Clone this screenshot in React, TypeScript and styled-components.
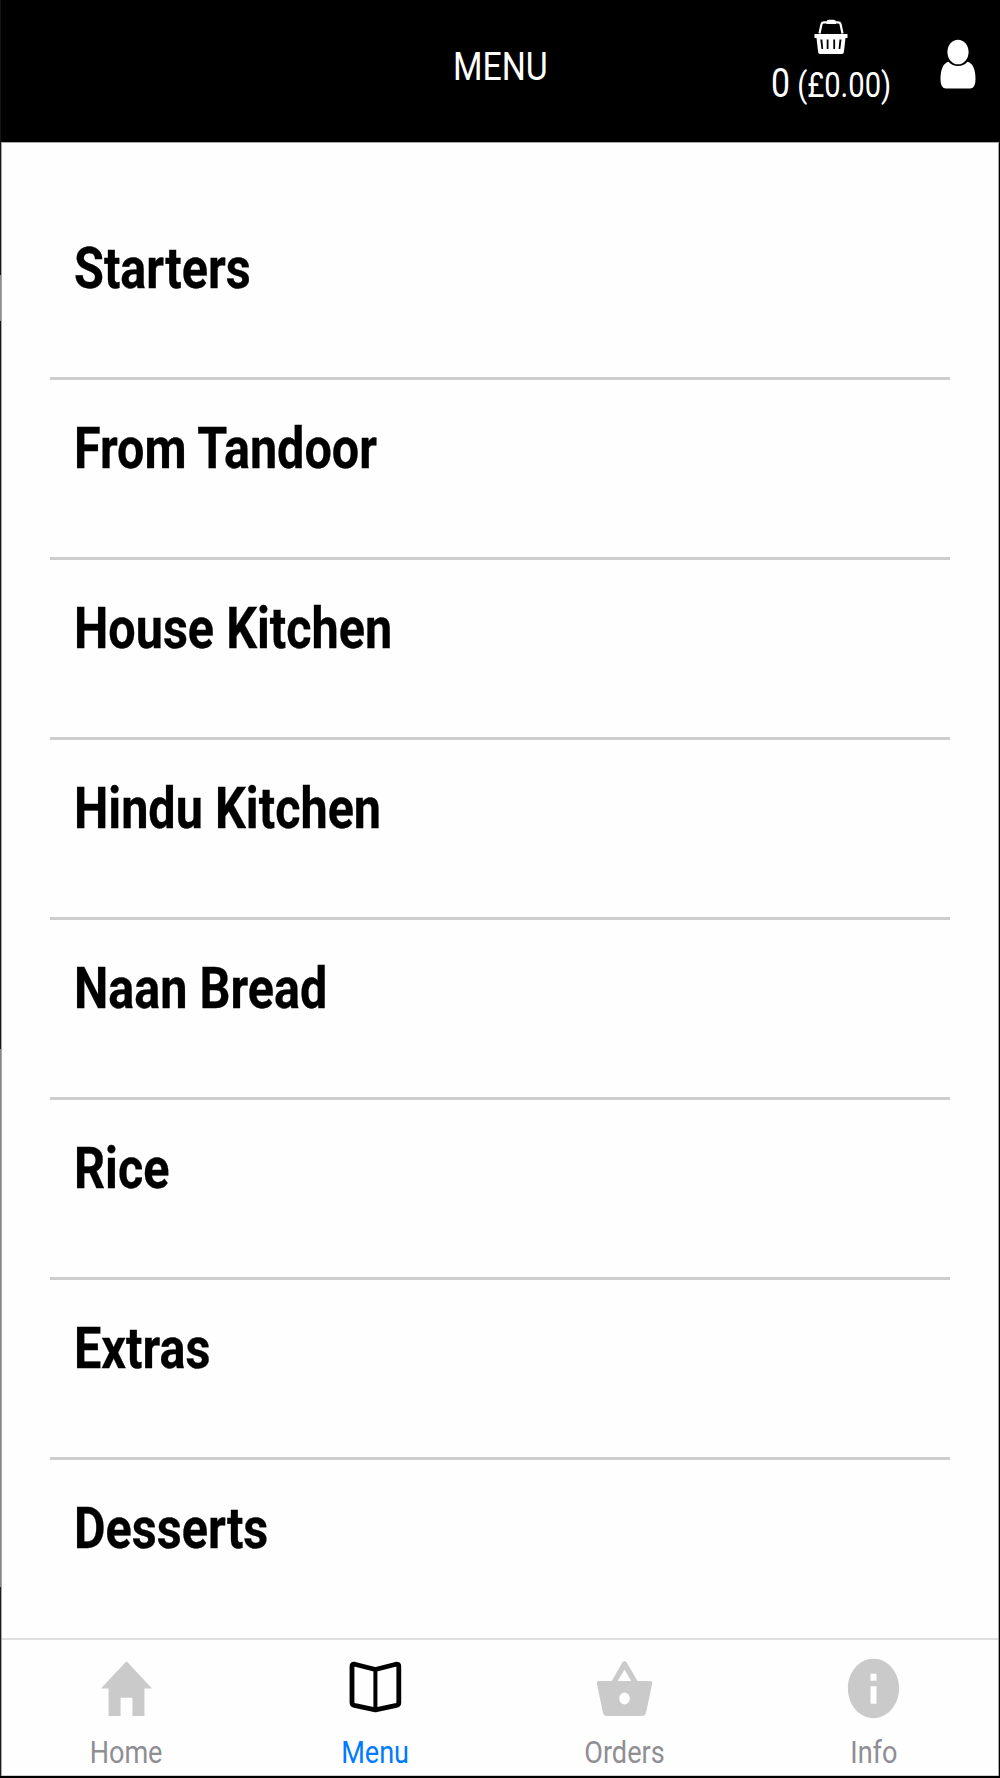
import React from "react";
import styled, { createGlobalStyle } from "styled-components";

const GlobalStyle = createGlobalStyle`
  * { box-sizing: border-box; }
  html, body { margin: 0; padding: 0; background: #fff; }
`;

const Frame = styled.div`
  width: 1000px;
  height: 1778px;
  display: flex;
  overflow: hidden;
  border-right: 1px solid #000;
  border-bottom: 2px solid #000;
`;

const FrameEdge = styled.div`
  flex: none;
  width: 1px;
  background: linear-gradient(
    #15161a 275px,
    #8c8c8c 275px 321px,
    #15161a 321px 1049px,
    #868686 1049px 1587px,
    #1c1c1c 1587px
  );
`;

const Screen = styled.div`
  flex: 1;
  display: flex;
  flex-direction: column;
  background: #fefefe;
  font-family: Roboto, "Liberation Sans", sans-serif;
`;

const Header = styled.header`
  flex: none;
  height: 142px;
  display: grid;
  grid-template-columns: 1fr 140px 1fr;
  background: #000;
  color: #fff;
`;

const Title = styled.h1`
  grid-column: 2;
  margin: 0;
  padding-top: 45px;
  justify-self: center;
  font-size: 39.5px;
  font-weight: 400;
  line-height: 44px;
  white-space: nowrap;
  transform: scaleX(0.856);
`;

const HeaderActions = styled.div`
  grid-column: 3;
  justify-self: end;
  padding-right: 23px;
  display: flex;
  align-items: flex-start;
`;

const BasketButton = styled.div`
  width: 130px;
  margin-right: 44px;
  padding-top: 19px;
  display: flex;
  flex-direction: column;
  align-items: center;
`;

const BasketTotal = styled.div`
  margin-top: 8px;
  font-size: 34.5px;
  line-height: 44px;
  white-space: nowrap;
  transform: scaleX(0.846);
`;

const BasketCount = styled.span`
  font-size: 40px;
`;

const AccountButton = styled.div`
  padding-top: 39px;
  display: flex;
`;

const Body = styled.div`
  flex: 1;
  min-height: 0;
  display: flex;
  flex-direction: column;
  border: solid #a8a8a8;
  border-width: 1px 1px 0;
`;

const MenuList = styled.ul`
  flex: 1;
  min-height: 0;
  margin: 0;
  padding: 57px 48px 0;
  list-style: none;
  overflow: hidden;
`;

const MenuItem = styled.li`
  height: 180px;
  padding: 32.500px 0 0 24px;
  border-bottom: 3px solid #cdcdcd;
  &:last-child { border-bottom: 0; }
`;

const MenuLabel = styled.span`
  display: inline-block;
  color: #000;
  font-size: 57px;
  font-weight: 700;
  line-height: 72px;
  white-space: nowrap;
  transform: scaleX(0.852);
  transform-origin: left center;
  -webkit-text-stroke: 0.3px #000;
`;

const TabBar = styled.nav`
  flex: none;
  height: 138px;
  display: grid;
  grid-template-columns: repeat(4, 1fr);
  border-top: 2px solid #dedede;
  border-bottom: 1px solid #d0d0d0;
`;

const Tab = styled.div`
  padding-top: 12px;
  display: flex;
  flex-direction: column;
  align-items: center;
`;

const TabLabel = styled.span<{ $active?: boolean }>`
  margin-top: 8px;
  color: ${(p) => (p.$active ? "#007aff" : "#8e8e93")};
  font-size: 32px;
  line-height: 38px;
  white-space: nowrap;
  transform: scaleX(0.846);
`;

const Icon = styled.svg`
  display: block;
  flex: none;
`;

const HomeIcon = () => (
  <Icon width="63" height="73" viewBox="0 0 512 512" preserveAspectRatio="none" fill="#cacaca">
    <path d="M208 448V320h96v128h97.6V256H464L256 64 48 256h62.4v192z" />
  </Icon>
);

const BookIcon = () => (
  <Icon width="63" height="73" viewBox="0 0 63 73" fill="none" stroke="#000" strokeWidth="4.800" strokeLinejoin="round">
    <path d="M31.400 17.500L10.800 12.200Q8 11.600 8 14.500V50.500Q8 52.800 10.300 53.400L31.400 57.800L52.500 53.400Q54.800 52.800 54.800 50.500V14.500Q54.800 11.600 52 12.200Z" />
    <path d="M31.400 17V57.500" strokeWidth="4" />
  </Icon>
);

const OrdersIcon = () => (
  <Icon width="63" height="73" viewBox="0 0 63 73" fill="#cacaca" fillRule="evenodd">
    <path d="M18.800 29L29.300 10.500Q31.500 7.500 33.700 10.500L44.500 29H57Q59.700 29 59.100 32L53.300 59.500Q52.500 64 49 64H14Q10.500 64 9.700 59.500L3.900 32Q3.300 29 6 29ZM24.800 29H38.200L31.500 17.500ZM31.500 40.500A5.300 6 0 1 0 31.500 52.500A5.300 6 0 1 0 31.500 40.500Z" />
  </Icon>
);

const InfoIcon = () => (
  <Icon width="63" height="73" viewBox="0 0 512 512" preserveAspectRatio="none" fill="#cacaca">
    <path d="M256 48C141.200 48 48 141.200 48 256s93.200 208 208 208 208-93.200 208-208S370.800 48 256 48zm24 315h-48V241h48v122zm0-162h-48v-49h48v49z" />
  </Icon>
);

const BasketIcon = () => (
  <Icon width="34" height="35" viewBox="0 0 34 35" fill="none">
    <path d="M5.500 14.500L7.500 5Q8 3.300 10 3.300H24Q26 3.300 26.500 5L28.500 14.500" stroke="#fff" strokeWidth="2.200" />
    <path d="M12.500 3Q12.500 .7 15 .7H19.500Q22 .7 22 3V5H12.500Z" fill="#fff" />
    <path
      fill="#fff"
      fillRule="evenodd"
      d="M.5 15H33.500V19H31.500L29.900 33Q29.600 35 28 35H6Q4.400 35 4.100 33L2.500 19H.5ZM6.300 20.500L7.500 30H9.200L8.300 20.500ZM12.700 20.500V30H14.500V20.500ZM19.300 20.500V30H21.100V20.500ZM25.500 20.500L24.600 30H26.300L27.500 20.500Z"
    />
  </Icon>
);

const PersonIcon = () => (
  <Icon width="36" height="50" viewBox="0 0 36 50" fill="#fff">
    <ellipse cx="18" cy="13" rx="10.600" ry="12.300" />
    <path d="M8.500 22.700Q12.500 27 18 27T27.500 22.700Q35.500 25 35.500 40.500Q35.500 49.500 30 49.500H6Q.5 49.500 .5 40.500Q.5 25 8.500 22.700Z" />
  </Icon>
);

const sections = [
  "Starters",
  "From Tandoor",
  "House Kitchen",
  "Hindu Kitchen",
  "Naan Bread",
  "Rice",
  "Extras",
  "Desserts",
];

const tabs = [
  { label: "Home", icon: HomeIcon },
  { label: "Menu", icon: BookIcon, active: true },
  { label: "Orders", icon: OrdersIcon },
  { label: "Info", icon: InfoIcon },
];

export default function App() {
  return (
    <>
      <GlobalStyle />
      <Frame>
        <FrameEdge />
        <Screen>
          <Header>
            <Title>MENU</Title>
            <HeaderActions>
              <BasketButton>
                <BasketIcon />
                <BasketTotal>
                  <BasketCount>0</BasketCount> (£0.00)
                </BasketTotal>
              </BasketButton>
              <AccountButton>
                <PersonIcon />
              </AccountButton>
            </HeaderActions>
          </Header>
          <Body>
            <MenuList>
              {sections.map((name) => (
                <MenuItem key={name}>
                  <MenuLabel>{name}</MenuLabel>
                </MenuItem>
              ))}
            </MenuList>
            <TabBar>
              {tabs.map(({ label, icon: TabIcon, active }) => (
                <Tab key={label}>
                  <TabIcon />
                  <TabLabel $active={active}>{label}</TabLabel>
                </Tab>
              ))}
            </TabBar>
          </Body>
        </Screen>
      </Frame>
    </>
  );
}
